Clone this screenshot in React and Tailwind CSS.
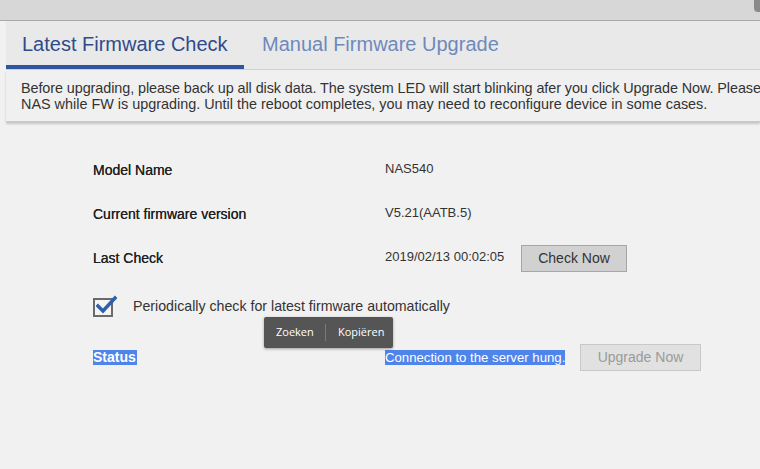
export default function App() {
  return (
    <div className="w-[760px] h-[469px] overflow-hidden bg-[#f1f1f1] relative" style={{ fontFamily: '"Liberation Sans", Arial, sans-serif' }}>
      <div className="h-[21px] bg-[#d7d7d7] border-b border-[#a9a9a9] relative">
        <div className="absolute right-0 top-0 w-[6px] h-[12px] rounded-bl-[4px] bg-[#8a8a8a]" />
      </div>
      <div className="ml-[6px] bg-[#e9e9e9] h-[49px] flex items-end border-b border-[#d0d0d0]">
        <div className="w-[238px] h-[49px] flex flex-col">
          <div className="flex-1 pl-[16px] pt-[9px] text-[20px] text-[#2f4b8c]">Latest Firmware Check</div>
          <div className="h-[4px] bg-[#2e55a0]" />
        </div>
        <div className="h-[49px] pl-[18px] pt-[9px] text-[20px] text-[#6e89bb]">Manual Firmware Upgrade</div>
      </div>
      <div className="ml-[6px] bg-[#f0f0f0] h-[52px] pl-[15px] pt-[10px] text-[14.4px] leading-[16px] text-[#333] whitespace-nowrap overflow-hidden shadow-[0_2px_2px_rgba(0,0,0,0.18)] border-b border-[#c9c9c9]">
        <div className="tracking-[-0.08px]">Before upgrading, please back up all disk data. The system LED will start blinking afer you click Upgrade Now. Please</div>
        <div>NAS while FW is upgrading. Until the reboot completes, you may need to reconfigure device in some cases.</div>
      </div>

      <div className="pl-[93px] pt-[25px] text-[#222]">
        <div className="flex items-center h-[44px]">
          <div className="w-[292px] text-[14px] [text-shadow:0_0_0.3px_#222] pt-[3px]">Model Name</div>
          <div className="text-[13px] text-[#333]">NAS540</div>
        </div>
        <div className="flex items-center h-[44px]">
          <div className="w-[292px] text-[14px] [text-shadow:0_0_0.3px_#222] pt-[3px]">Current firmware version</div>
          <div className="text-[13px] text-[#333]">V5.21(AATB.5)</div>
        </div>
        <div className="flex items-center h-[44px]">
          <div className="w-[292px] text-[14px] [text-shadow:0_0_0.3px_#222] pt-[2px]">Last Check</div>
          <div className="text-[13px] text-[#333] w-[136px]">2019/02/13 00:02:05</div>
          <div className="w-[106px] h-[27px] mt-[3px] bg-[#d1d1d1] border border-[#a6a6a6] flex items-center justify-center text-[14px] text-[#333]">Check Now</div>
        </div>

        <div className="flex items-center h-[52px] mt-[2px]">
          <div className="relative w-[20px] h-[19px] border-2 border-[#6a6a6a] bg-[#f4f4f4] mr-[20px]">
            <svg className="absolute left-[1px] top-[-5px]" width="22" height="20" viewBox="0 0 22 20">
              <path d="M2 11 L7 16 L19 3" fill="none" stroke="#2f5eaa" strokeWidth="3.4" strokeLinecap="square" />
            </svg>
          </div>
          <div className="text-[14.2px] text-[#333]">Periodically check for latest firmware automatically</div>
        </div>

        <div className="flex items-center h-[52px] mt-[-2px]">
          <div className="w-[292px]">
            <span className="bg-[#4f84eb] text-white text-[14px] font-bold leading-[15px] inline-block pr-[1px]">Status</span>
          </div>
          <div className="w-[195px]">
            <span className="bg-[#4f84eb] text-white text-[13.2px] leading-[15px] inline-block">Connection to the server hung.</span>
          </div>
          <div className="w-[121px] h-[27px] bg-[#e1e1e1] border border-[#c9c9c9] flex items-center justify-center text-[14px] text-[#9a9a9a]">Upgrade Now</div>
        </div>
      </div>

      <div className="absolute left-[264px] top-[317px] w-[129px] h-[31px] bg-[#555555] rounded-[2px] shadow-[0_1px_3px_rgba(0,0,0,0.35)] flex items-center text-white text-[11px]" style={{ fontFamily: '"Open Sans", "Liberation Sans", sans-serif' }}>
        <div className="pl-[12px] w-[61px]">Zoeken</div>
        <div className="w-px h-[17px] bg-[#7a7a7a]" />
        <div className="pl-[12px]">Kopiëren</div>
      </div>
    </div>
  );
}
